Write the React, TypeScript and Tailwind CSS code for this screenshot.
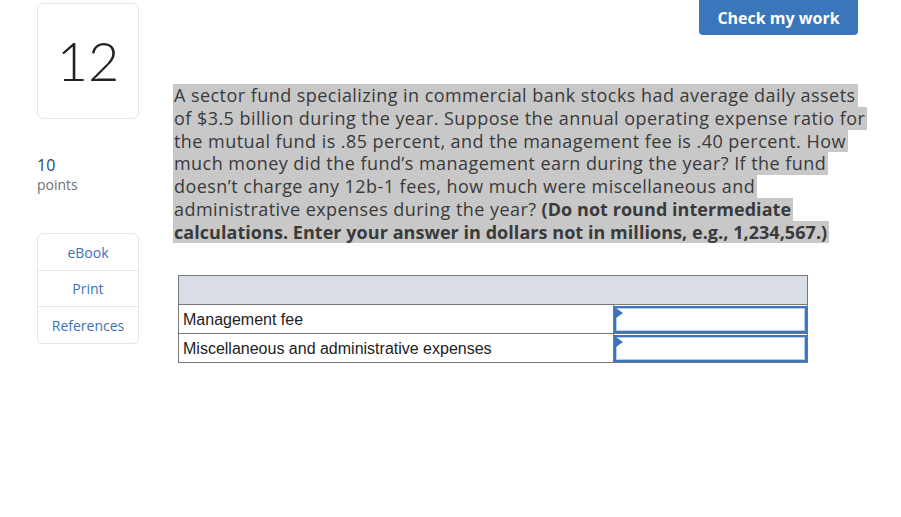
import React from 'react';

const lines: { text: React.ReactNode }[] = [
  { text: 'A sector fund specializing in commercial bank stocks had average daily assets' },
  { text: 'of $3.5 billion during the year. Suppose the annual operating expense ratio for' },
  { text: 'the mutual fund is .85 percent, and the management fee is .40 percent. How' },
  { text: 'much money did the fund\u2019s management earn during the year? If the fund' },
  { text: 'doesn\u2019t charge any 12b-1 fees, how much were miscellaneous and' },
  {
    text: (
      <>
        administrative expenses during the year?{' '}
        <b className="font-bold tracking-[0.05px]">(Do not round intermediate</b>
      </>
    ),
  },
  {
    text: (
      <b className="font-bold tracking-[0.05px]">
        calculations. Enter your answer in dollars not in millions, e.g., 1,234,567.)
      </b>
    ),
  },
];

const AnswerCell: React.FC = () => (
  <td className="p-0 border border-[#777] w-[194px] h-[29px]">
    <div className="relative h-[27px] border-2 border-[#3b76bd] bg-white">
      <div className="absolute inset-0 border border-[#b8cdea]" />
      <span className="absolute left-0 top-0 w-0 h-0 border-y-[5px] border-y-transparent border-l-[7px] border-l-[#3b76bd]" />
    </div>
  </td>
);

export default function App() {
  return (
    <div className="relative w-[901px] h-[517px] bg-white overflow-hidden font-['Open_Sans',sans-serif] text-[#333]">
      <div className="flex">
        {/* left rail */}
        <div className="ml-[37px] w-[102px] pt-[3px] shrink-0">
          <div className="h-[116px] border border-[#e6e6e6] rounded-md flex items-center justify-center">
            <span className="text-[54px] font-['Lato',sans-serif] font-light text-[#222] leading-none">12</span>
          </div>
          <div className="mt-[36px] text-[16px] leading-5 text-[#2a4678]">10</div>
          <div className="text-[14px] leading-5 text-[#707070]">points</div>
          <div className="mt-[38px] border border-[#e6e6e6] rounded-md text-[14px] text-[#3b72b8] text-center">
            <div className="h-[37px] flex items-center justify-center border-b border-[#e6e6e6]">eBook</div>
            <div className="h-[36px] flex items-center justify-center border-b border-[#e6e6e6]">Print</div>
            <div className="h-[36px] flex items-center justify-center">References</div>
          </div>
        </div>

        {/* main */}
        <div className="ml-[34px] flex-1">
          <div className="flex justify-end pr-[43px]">
            <button className="w-[159px] h-[35px] rounded-b-[4px] bg-[#3a76b9] text-white text-[16px] font-bold">
              Check my work
            </button>
          </div>
          <div className="mt-[49px] text-[18px] leading-[22.75px] tracking-[0.45px] text-[#3a3a3a]">
            {lines.map((l, i) => (
              <div key={i} className="w-fit bg-[#c8c8c8] pl-[1px] pr-[2px] whitespace-nowrap">
                {l.text}
              </div>
            ))}
          </div>
          <table className="mt-[32px] ml-[5px] border-collapse font-['Liberation_Sans',Arial,sans-serif] text-[16px] text-[#222]">
            <tbody>
              <tr>
                <td colSpan={2} className="h-[29px] w-[629px] bg-[#d9dde6] border border-[#777]" />
              </tr>
              <tr>
                <td className="h-[29px] w-[435px] border border-[#777] px-[4px] pt-[2px]">Management fee</td>
                <AnswerCell />
              </tr>
              <tr>
                <td className="h-[29px] border border-[#777] px-[4px] pt-[2px]">Miscellaneous and administrative expenses</td>
                <AnswerCell />
              </tr>
            </tbody>
          </table>
        </div>
      </div>
    </div>
  );
}
